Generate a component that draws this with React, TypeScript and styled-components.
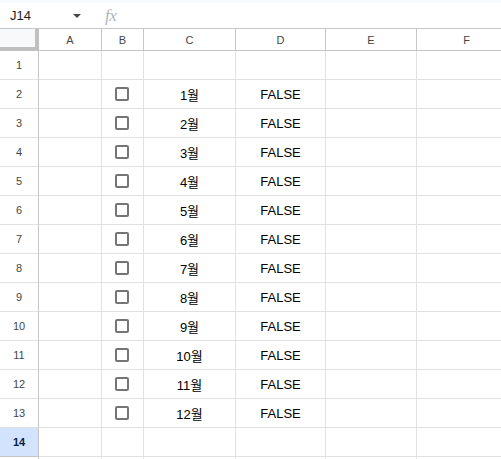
import React from 'react';
import styled, { createGlobalStyle } from 'styled-components';

const GlobalStyle = createGlobalStyle`
  html, body {
    margin: 0;
    padding: 0;
    background: #fff;
    overflow: hidden;
  }
  body {
    font-family: Arial, 'Liberation Sans', 'Noto Sans CJK KR', sans-serif;
  }
`;

// Styled Components
const Page = styled.div`
  width: 501px;
  height: 459px;
  overflow: hidden;
  display: flex;
  flex-direction: column;
`;

const TopStrip = styled.div`
  flex-shrink: 0;
  height: 3px;
  background: #f8fafd;
`;

const FormulaBar = styled.div`
  flex-shrink: 0;
  height: 25px;
  display: flex;
  align-items: center;
  border-bottom: 1px solid #c4c7c5;
  font-size: 13px;
  color: #1f1f1f;
`;

const NameBox = styled.div`
  width: 85px;
  padding-left: 10px;
  padding-right: 4px;
  display: flex;
  align-items: center;
  justify-content: space-between;
  box-sizing: border-box;
`;

const Caret = styled.span`
  width: 0;
  height: 0;
  border-left: 4px solid transparent;
  border-right: 4px solid transparent;
  border-top: 4px solid #444746;
`;

const Fx = styled.span`
  margin-left: 20px;
  font-family: 'Liberation Serif', 'Times New Roman', serif;
  font-style: italic;
  font-size: 17px;
  color: #b0b3b6;
  letter-spacing: -0.5px;
`;

const Grid = styled.div`
  flex-shrink: 0;
  display: grid;
  grid-template-columns: 39px 63px 42px 92px 90px 91px 100px;
  grid-template-rows: 22px repeat(15, 29px);
`;

const Corner = styled.div`
  background: #f8f9fa;
  border-right: 4px solid #c0c0c0;
  border-bottom: 4px solid #c0c0c0;
  box-sizing: border-box;
`;

const ColHeader = styled.div`
  display: flex;
  align-items: center;
  justify-content: center;
  border-right: 1px solid #c4c7c5;
  border-bottom: 1px solid #c4c7c5;
  box-sizing: border-box;
  font-size: 11px;
  color: #444746;
`;

const RowHeader = styled.div<{ $active?: boolean }>`
  display: flex;
  align-items: center;
  justify-content: center;
  border-right: 1px solid #c4c7c5;
  border-bottom: 1px solid ${({ $active }) => ($active ? '#c4c7c5' : '#e1e1e1')};
  box-sizing: border-box;
  font-size: 11px;
  background: ${({ $active }) => ($active ? '#d3e3fd' : '#fff')};
  color: ${({ $active }) => ($active ? '#041e49' : '#444746')};
  font-weight: ${({ $active }) => ($active ? 'bold' : 'normal')};
`;

const Cell = styled.div`
  display: flex;
  align-items: center;
  justify-content: center;
  border-right: 1px solid #e1e1e1;
  border-bottom: 1px solid #e1e1e1;
  box-sizing: border-box;
  font-size: 13px;
  color: #000;
  white-space: nowrap;
`;

const CheckBox = styled.span`
  width: 14px;
  height: 14px;
  margin-right: 1px;
  box-sizing: border-box;
  border: 2px solid #757575;
  border-radius: 2px;
`;

const columns = ['A', 'B', 'C', 'D', 'E', 'F'];
const rows = Array.from({ length: 15 }, (_, i) => i + 1);

const App = () => (
  <Page>
    <GlobalStyle />
    <TopStrip />
    <FormulaBar>
      <NameBox>
        J14
        <Caret />
      </NameBox>
      <Fx>fx</Fx>
    </FormulaBar>
    <Grid>
      <Corner />
      {columns.map((c) => (
        <ColHeader key={c}>{c}</ColHeader>
      ))}
      {rows.map((r) => {
        const month = r >= 2 && r <= 13 ? r - 1 : null;
        return (
          <React.Fragment key={r}>
            <RowHeader $active={r === 14}>{r < 15 ? r : ''}</RowHeader>
            <Cell />
            <Cell>{month && <CheckBox />}</Cell>
            <Cell>{month && `${month}월`}</Cell>
            <Cell>{month && 'FALSE'}</Cell>
            <Cell />
            <Cell />
          </React.Fragment>
        );
      })}
    </Grid>
  </Page>
);

export default App;
